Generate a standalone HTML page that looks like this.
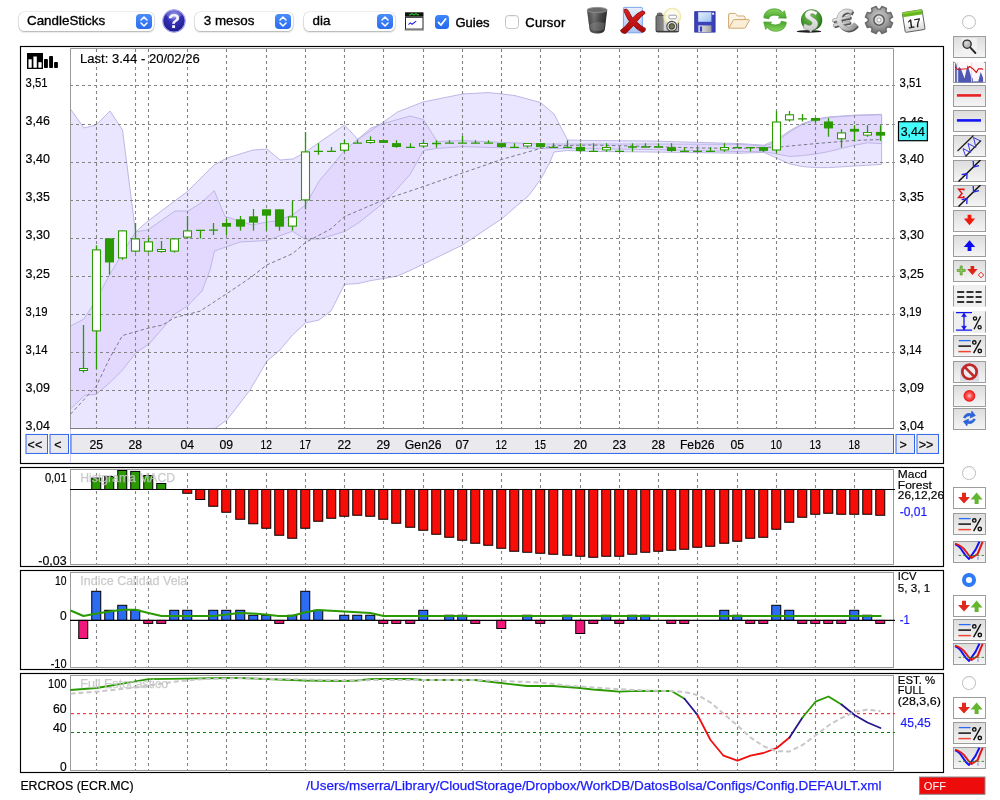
<!DOCTYPE html>
<html lang="ca"><head><meta charset="utf-8"><title>ERCROS (ECR.MC)</title>
<style>
html,body{margin:0;padding:0;background:#fff;}
body{width:1000px;height:800px;position:relative;overflow:hidden;will-change:transform;font-family:"Liberation Sans",sans-serif;color:#000;}
#chart{position:absolute;left:0;top:0;}
svg text{font-family:"Liberation Sans",sans-serif;}
.sel{position:absolute;top:11.5px;height:19px;background:#fff;border-radius:5.5px;box-shadow:0 0 0 0.5px rgba(0,0,0,.13),0 1px 2px rgba(0,0,0,.28);font-size:13.4px;line-height:18.5px;box-sizing:border-box;padding-left:8px;-webkit-text-stroke:0.35px #000;}
.sel i{position:absolute;right:1.6px;top:2.2px;width:16px;height:15px;border-radius:4px;background:linear-gradient(#4a8dfa,#2a6cf0);}
.sel i svg{position:absolute;left:0;top:0;}
.cb{position:absolute;top:14.5px;width:14px;height:14px;border-radius:3.5px;box-sizing:border-box;}
.cb.on{background:linear-gradient(#3f86fa,#2468ee);}
.cb.off{background:#fff;border:1px solid #c4c4c4;box-shadow:inset 0 1px 1px rgba(0,0,0,.06);}
.lbl{position:absolute;top:13.9px;font-size:13px;-webkit-text-stroke:0.4px #000;line-height:18px;}
.ico{position:absolute;}
.rb{position:absolute;left:953px;width:33px;height:22px;box-sizing:border-box;border:1px solid #9c9c9c;background:linear-gradient(#dddddd,#f4f4f4);}
.rb.w{background:#fff;}
.rb svg{position:absolute;left:-1px;top:-1px;}
.radio{position:absolute;left:962px;width:13.5px;height:13.5px;border-radius:50%;box-sizing:border-box;border:1px solid #bdbdbd;background:#fff;box-shadow:inset 0 1px 1px rgba(0,0,0,.05);}
.radio.on{border:4.3px solid #2f7bf6;}
.nav{position:absolute;top:434.5px;height:19px;box-sizing:border-box;border:1px solid #3d70e4;background:#e9e9ee;font-size:12.5px;line-height:16px;text-align:center;}
.dl{position:absolute;top:437px;width:50px;margin-left:-25px;text-align:center;font-size:12px;line-height:14px;}
.st{position:absolute;font-size:12.4px;line-height:16px;white-space:nowrap;}
.ax{position:absolute;font-size:12px;line-height:12px;white-space:nowrap;}
.axr{text-align:right;width:50px;}
</style></head><body>
<svg id="chart" width="1000" height="800" viewBox="0 0 1000 800">
<g fill="none" stroke="#000" stroke-width="1.15">
<rect x="20.5" y="46.5" width="923" height="417"/>
<rect x="20.5" y="467.5" width="923" height="99"/>
<rect x="20.5" y="570.5" width="923" height="99"/>
<rect x="20.5" y="673.5" width="923" height="99"/>
</g>
<polygon points="70.5,109 84,128 96,125 110,111 122.5,130 135.5,232 148,221 188,191 214,165 227,158 253,150 267,149 280,160 293,159 305.5,152 344.5,125 358,139.5 383.5,122 397.5,112 423,102 462.5,94 488,92.6 500,93.7 515,95.6 540.5,102.5 554,114 567.5,140 590,140.5 650,141 740,143.6 764,145.2 776.5,139.6 789.6,130.8 802.4,123.6 815.5,119.1 828.5,116.9 854.6,115.1 881.6,114.3 881.6,164.4 854.6,166 828.5,167.6 815.5,167.6 802.4,166.5 789.6,163.9 776.5,158 764,152.4 740,153.2 650,152 590,151.4 567.5,150.5 554,152 549.5,163 540.5,179.6 529,195.3 501.5,219 481,232.6 462.5,245 423.5,264 410,270.5 397.5,276 383.5,278.5 371,280.5 358,283.6 344.5,284.3 331,311 319,320 305.5,323 292.5,335 280,350 267,361 250,390 227,420 215,428.5 70.5,428.5" fill="#ebe6ff"/>
<polygon points="70.5,326 84,319 96,300 110,274 135.5,232 148,229.8 175,211 188,211 201,203 214.2,190.7 225,216.5 240,221 252,225 267,222 276,221 292.5,215 305.5,205 319.5,180.5 328.5,170 344.5,150.5 371,128 383.5,123.5 410,116 423.5,119.6 437,141.5 462.5,140.6 501.5,142.4 540.5,144 590,144 650,144 740,144.4 764,146 772,143.6 781.6,138 789.6,131.9 802.4,124.4 815.5,120.4 828.5,117.5 854.6,115.6 881.6,114.8 881.6,143.6 867.5,142.8 854.6,145.2 841.6,148.4 828.5,151.6 815.5,154 802.4,155.6 789.6,156.4 776.5,154 764,151.6 740,151.6 650,149.5 590,148.6 540.5,148.4 501.5,147.8 462.5,146.6 437,148.4 423.5,150.5 410,174.5 398,188 383.5,203 359,222.5 344.5,231.5 320,239 304.5,239 292.5,231.2 267,240.5 240,242 214.5,251 210,270 202,291 187.5,306 175,314 149,344 136,352.5 122.5,370 110,382.5 96,394.5 85,395 70.5,409" fill="#e3d9fe"/>
<g fill="none" stroke="#bcb8e6" stroke-width="1">
<polyline points="70.5,109 84,128 96,125 110,111 122.5,130 135.5,232 148,221 188,191 214,165 227,158 253,150 267,149 280,160 293,159 305.5,152 344.5,125 358,139.5 383.5,122 397.5,112 423,102 462.5,94 488,92.6 500,93.7 515,95.6 540.5,102.5 554,114 567.5,140 590,140.5 650,141 740,143.6 764,145.2 776.5,139.6 789.6,130.8 802.4,123.6 815.5,119.1 828.5,116.9 854.6,115.1 881.6,114.3 881.6,164.4 854.6,166 828.5,167.6 815.5,167.6 802.4,166.5 789.6,163.9 776.5,158 764,152.4 740,153.2 650,152 590,151.4 567.5,150.5 554,152 549.5,163 540.5,179.6 529,195.3 501.5,219 481,232.6 462.5,245 423.5,264 410,270.5 397.5,276 383.5,278.5 371,280.5 358,283.6 344.5,284.3 331,311 319,320 305.5,323 292.5,335 280,350 267,361 250,390 227,420 215,428.5"/>
<polyline points="70.5,326 84,319 96,300 110,274 135.5,232 148,229.8 175,211 188,211 201,203 214.2,190.7 225,216.5 240,221 252,225 267,222 276,221 292.5,215 305.5,205 319.5,180.5 328.5,170 344.5,150.5 371,128 383.5,123.5 410,116 423.5,119.6 437,141.5 462.5,140.6 501.5,142.4 540.5,144 590,144 650,144 740,144.4 764,146 772,143.6 781.6,138 789.6,131.9 802.4,124.4 815.5,120.4 828.5,117.5 854.6,115.6 881.6,114.8 881.6,143.6 867.5,142.8 854.6,145.2 841.6,148.4 828.5,151.6 815.5,154 802.4,155.6 789.6,156.4 776.5,154 764,151.6 740,151.6 650,149.5 590,148.6 540.5,148.4 501.5,147.8 462.5,146.6 437,148.4 423.5,150.5 410,174.5 398,188 383.5,203 359,222.5 344.5,231.5 320,239 304.5,239 292.5,231.2 267,240.5 240,242 214.5,251 210,270 202,291 187.5,306 175,314 149,344 136,352.5 122.5,370 110,382.5 96,394.5 85,395 70.5,409"/>
</g>
<line x1="70.5" y1="109" x2="70.5" y2="463" stroke="#cfc9f3" stroke-width="1"/>
<g stroke="#848484" stroke-width="1.1" stroke-dasharray="3 3">
<line x1="96.5" y1="49" x2="96.5" y2="428"/>
<line x1="135.5" y1="49" x2="135.5" y2="428"/>
<line x1="148.5" y1="49" x2="148.5" y2="428"/>
<line x1="187.5" y1="49" x2="187.5" y2="428"/>
<line x1="226.5" y1="49" x2="226.5" y2="428"/>
<line x1="266.5" y1="49" x2="266.5" y2="428"/>
<line x1="305.5" y1="49" x2="305.5" y2="428"/>
<line x1="344.5" y1="49" x2="344.5" y2="428"/>
<line x1="383.5" y1="49" x2="383.5" y2="428"/>
<line x1="423.5" y1="49" x2="423.5" y2="428"/>
<line x1="462.5" y1="49" x2="462.5" y2="428"/>
<line x1="501.5" y1="49" x2="501.5" y2="428"/>
<line x1="540.5" y1="49" x2="540.5" y2="428"/>
<line x1="580.5" y1="49" x2="580.5" y2="428"/>
<line x1="619.5" y1="49" x2="619.5" y2="428"/>
<line x1="658.5" y1="49" x2="658.5" y2="428"/>
<line x1="697.5" y1="49" x2="697.5" y2="428"/>
<line x1="737.5" y1="49" x2="737.5" y2="428"/>
<line x1="776.5" y1="49" x2="776.5" y2="428"/>
<line x1="815.5" y1="49" x2="815.5" y2="428"/>
<line x1="854.5" y1="49" x2="854.5" y2="428"/>
<line x1="70" y1="85.5" x2="895" y2="85.5"/>
<line x1="70" y1="124.5" x2="895" y2="124.5"/>
<line x1="70" y1="162.5" x2="895" y2="162.5"/>
<line x1="70" y1="200.5" x2="895" y2="200.5"/>
<line x1="70" y1="238.5" x2="895" y2="238.5"/>
<line x1="70" y1="276.5" x2="895" y2="276.5"/>
<line x1="70" y1="314.5" x2="895" y2="314.5"/>
<line x1="70" y1="352.5" x2="895" y2="352.5"/>
<line x1="70" y1="390.5" x2="895" y2="390.5"/>
</g>
<path d="M70.5 428.5V48.5H893.5V428.5" fill="none" stroke="#9a9a9a" stroke-width="1"/>
<line x1="70" y1="428.5" x2="894" y2="428.5" stroke="#7d7d7d" stroke-width="1"/>
<polyline points="70.5,414.2 96.3,386.2 110,357.5 122.5,335.5 148.7,328 162.5,325 175,317.5 200,311.2 226.7,293.7 250,278 266.7,265 292.5,253.7 305.5,242.5 331,228.8 344.5,216.5 383.5,200 423.5,186.5 462.5,173 501.5,159.5 540.5,148.4 554,145.8 590,145 650,146.5 700,148 740,148.4 781.6,146.8 815.5,143.6 854.6,140.4 880.5,139.6" fill="none" stroke="#747482" stroke-width="0.95" stroke-dasharray="3.5 2.5"/>
<g stroke="#2a9a00" stroke-width="1.3" fill="#fff">
<line x1="83.5" y1="325" x2="83.5" y2="372.6"/>
<rect x="79.5" y="368.5" width="8" height="2" fill="#fff" stroke-width="1"/>
<line x1="96.5" y1="245.4" x2="96.5" y2="369"/>
<rect x="92.5" y="249.9" width="8" height="81" fill="#fff" stroke-width="1.1"/>
<line x1="109.5" y1="238.4" x2="109.5" y2="274.6"/>
<rect x="105.5" y="238.9" width="8" height="23" fill="#2a9a00" stroke-width="1.1"/>
<line x1="122.5" y1="230.4" x2="122.5" y2="259.8"/>
<rect x="118.5" y="230.9" width="8" height="27" fill="#fff" stroke-width="1.1"/>
<line x1="135.5" y1="223" x2="135.5" y2="252.6"/>
<rect x="131.5" y="238.9" width="8" height="12.2" fill="#fff" stroke-width="1.1"/>
<line x1="148.5" y1="238" x2="148.5" y2="252.6"/>
<rect x="144.5" y="241.9" width="8" height="9.2" fill="#fff" stroke-width="1.1"/>
<line x1="161.5" y1="241" x2="161.5" y2="252.6"/>
<rect x="157.5" y="249.5" width="8" height="2" fill="#fff" stroke-width="1"/>
<line x1="174.5" y1="238.4" x2="174.5" y2="252.6"/>
<rect x="170.5" y="238.9" width="8" height="12.2" fill="#fff" stroke-width="1.1"/>
<line x1="187.5" y1="216" x2="187.5" y2="238.8"/>
<rect x="183.5" y="230.9" width="8" height="6.2" fill="#fff" stroke-width="1.1"/>
<path d="M200.5 230.4V238.6M196 230.4H205" fill="none"/>
<path d="M213.5 223V235M209 230.2H218" fill="none"/>
<line x1="226.5" y1="219" x2="226.5" y2="235"/>
<rect x="222.5" y="223.5" width="8" height="2.6" fill="#2a9a00" stroke-width="1.1"/>
<line x1="240.5" y1="216" x2="240.5" y2="230.6"/>
<rect x="236.5" y="219.9" width="8" height="6.2" fill="#2a9a00" stroke-width="1.1"/>
<line x1="253.5" y1="209" x2="253.5" y2="230.6"/>
<rect x="249.5" y="216.9" width="8" height="5.2" fill="#2a9a00" stroke-width="1.1"/>
<line x1="266.5" y1="209.4" x2="266.5" y2="230.6"/>
<rect x="262.5" y="209.9" width="8" height="5.2" fill="#2a9a00" stroke-width="1.1"/>
<line x1="279.5" y1="209.4" x2="279.5" y2="230.6"/>
<rect x="275.5" y="209.9" width="8" height="16.2" fill="#2a9a00" stroke-width="1.1"/>
<line x1="292.5" y1="200.4" x2="292.5" y2="230.6"/>
<rect x="288.5" y="216.9" width="8" height="9.2" fill="#fff" stroke-width="1.1"/>
<line x1="305.5" y1="132" x2="305.5" y2="209.4"/>
<rect x="301.5" y="151.9" width="8" height="48" fill="#fff" stroke-width="1.1"/>
<path d="M318.5 143.2V154.8M314 151.3H323" fill="none"/>
<path d="M331.5 147V151.3M327 151.3H336" fill="none"/>
<line x1="344.5" y1="139.8" x2="344.5" y2="151.8"/>
<rect x="340.5" y="143.7" width="8" height="6.5" fill="#fff" stroke-width="1.1"/>
<path d="M357.5 139.8V143.2M353 143.2H362" fill="none"/>
<line x1="370.5" y1="136.3" x2="370.5" y2="143.6"/>
<rect x="366.5" y="140.5" width="8" height="2" fill="#fff" stroke-width="1"/>
<line x1="383.5" y1="140.2" x2="383.5" y2="142.8"/>
<rect x="379.5" y="140.7" width="8" height="1.6" fill="#2a9a00" stroke-width="1.1"/>
<line x1="396.5" y1="140.2" x2="396.5" y2="147.8"/>
<rect x="392.5" y="143.7" width="8" height="2.8" fill="#2a9a00" stroke-width="1.1"/>
<path d="M410.5 143.2V147.3M406 147.3H415" fill="none"/>
<line x1="423.5" y1="139.8" x2="423.5" y2="147.8"/>
<rect x="419.5" y="143.5" width="8" height="2.5" fill="#fff" stroke-width="1"/>
<path d="M436.5 140.2V147.8M432 143.5H441" fill="none"/>
<path d="M449.5 140.2V143.2M445 143.2H454" fill="none"/>
<path d="M462.5 136V143.2M458 143.2H467" fill="none"/>
<path d="M475.5 140.2V143.2M471 143.2H480" fill="none"/>
<path d="M488.5 140.2V143.2M484 143.2H493" fill="none"/>
<line x1="501.5" y1="143.2" x2="501.5" y2="147.8"/>
<rect x="497.5" y="143.7" width="8" height="2.8" fill="#2a9a00" stroke-width="1.1"/>
<path d="M514.5 143.2V147.3M510 147.3H519" fill="none"/>
<line x1="527.5" y1="143.5" x2="527.5" y2="147.8"/>
<rect x="523.5" y="143.5" width="8" height="2.5" fill="#fff" stroke-width="1"/>
<line x1="540.5" y1="143.2" x2="540.5" y2="147.8"/>
<rect x="536.5" y="143.7" width="8" height="2.8" fill="#2a9a00" stroke-width="1.1"/>
<path d="M553.5 143.2V147.3M549 147.3H558" fill="none"/>
<path d="M567.5 140.2V147.3M563 147.3H572" fill="none"/>
<line x1="580.5" y1="143.2" x2="580.5" y2="151.8"/>
<rect x="576.5" y="147.5" width="8" height="3" fill="#2a9a00" stroke-width="1.1"/>
<path d="M593.5 143.2V151.3M589 151.3H598" fill="none"/>
<line x1="606.5" y1="143.2" x2="606.5" y2="151.8"/>
<rect x="602.5" y="147.5" width="8" height="2.4" fill="#fff" stroke-width="1"/>
<path d="M619.5 147V151.3M615 151.3H624" fill="none"/>
<path d="M632.5 143.2V151.8M628 147H637" fill="none"/>
<path d="M645.5 143.2V147M641 147H650" fill="none"/>
<path d="M658.5 143.2V147M654 147H663" fill="none"/>
<line x1="671.5" y1="143.2" x2="671.5" y2="151.8"/>
<rect x="667.5" y="147.8" width="8" height="2.7" fill="#2a9a00" stroke-width="1.1"/>
<path d="M684.5 147.3V151.3M680 151.3H689" fill="none"/>
<path d="M697.5 147V151.3M693 151.3H702" fill="none"/>
<path d="M710.5 147.3V151.3M706 151.3H715" fill="none"/>
<line x1="724.5" y1="143.2" x2="724.5" y2="151.8"/>
<rect x="720.5" y="147.5" width="8" height="2.4" fill="#fff" stroke-width="1"/>
<path d="M737.5 143.2V147.7M733 147.7H742" fill="none"/>
<path d="M750.5 147.6V151.6M746 147.6H755" fill="none"/>
<line x1="763.5" y1="147.1" x2="763.5" y2="151.8"/>
<rect x="759.5" y="147.6" width="8" height="2.7" fill="#2a9a00" stroke-width="1.1"/>
<line x1="776.5" y1="110.8" x2="776.5" y2="153.2"/>
<rect x="772.5" y="122" width="8" height="28" fill="#fff" stroke-width="1.1"/>
<line x1="789.5" y1="111" x2="789.5" y2="121.6"/>
<rect x="785.5" y="114.8" width="8" height="5.1" fill="#fff" stroke-width="1.1"/>
<path d="M802.5 114V121.6M798 118.8H807" fill="none"/>
<line x1="815.5" y1="118" x2="815.5" y2="122.8"/>
<rect x="811.5" y="118.5" width="8" height="1.7" fill="#2a9a00" stroke-width="1.1"/>
<line x1="828.5" y1="118" x2="828.5" y2="136.7"/>
<rect x="824.5" y="122" width="8" height="5.9" fill="#2a9a00" stroke-width="1.1"/>
<line x1="841.5" y1="129.2" x2="841.5" y2="147.6"/>
<rect x="837.5" y="132.9" width="8" height="5.9" fill="#fff" stroke-width="1.1"/>
<line x1="854.5" y1="125.2" x2="854.5" y2="140.9"/>
<rect x="850.5" y="129.4" width="8" height="1.7" fill="#2a9a00" stroke-width="1.1"/>
<line x1="867.5" y1="125.2" x2="867.5" y2="136.8"/>
<rect x="863.5" y="132.5" width="8" height="2.6" fill="#fff" stroke-width="1"/>
<line x1="880.5" y1="125.2" x2="880.5" y2="140.9"/>
<rect x="876.5" y="132.5" width="8" height="2.6" fill="#2a9a00" stroke-width="1.1"/>
</g>
<rect x="70.5" y="469.5" width="823" height="95" fill="none" stroke="#9a9a9a" stroke-width="1"/>
<g stroke="#848484" stroke-width="1.1" stroke-dasharray="3 3">
<line x1="96.5" y1="473" x2="96.5" y2="564"/>
<line x1="135.5" y1="473" x2="135.5" y2="564"/>
<line x1="148.5" y1="473" x2="148.5" y2="564"/>
<line x1="187.5" y1="473" x2="187.5" y2="564"/>
<line x1="226.5" y1="473" x2="226.5" y2="564"/>
<line x1="266.5" y1="473" x2="266.5" y2="564"/>
<line x1="305.5" y1="473" x2="305.5" y2="564"/>
<line x1="344.5" y1="473" x2="344.5" y2="564"/>
<line x1="383.5" y1="473" x2="383.5" y2="564"/>
<line x1="423.5" y1="473" x2="423.5" y2="564"/>
<line x1="462.5" y1="473" x2="462.5" y2="564"/>
<line x1="501.5" y1="473" x2="501.5" y2="564"/>
<line x1="540.5" y1="473" x2="540.5" y2="564"/>
<line x1="580.5" y1="473" x2="580.5" y2="564"/>
<line x1="619.5" y1="473" x2="619.5" y2="564"/>
<line x1="658.5" y1="473" x2="658.5" y2="564"/>
<line x1="697.5" y1="473" x2="697.5" y2="564"/>
<line x1="737.5" y1="473" x2="737.5" y2="564"/>
<line x1="776.5" y1="473" x2="776.5" y2="564"/>
<line x1="815.5" y1="473" x2="815.5" y2="564"/>
<line x1="854.5" y1="473" x2="854.5" y2="564"/>
</g>
<g stroke="#000" stroke-width="1">
<rect x="91.75" y="478.1" width="9" height="11.35" fill="#2a9a00"/>
<rect x="104.75" y="476.5" width="9" height="12.95" fill="#2a9a00"/>
<rect x="117.75" y="470.5" width="9" height="18.95" fill="#2a9a00"/>
<rect x="130.75" y="471.4" width="9" height="18.05" fill="#2a9a00"/>
<rect x="143.75" y="475.5" width="9" height="13.95" fill="#2a9a00"/>
<rect x="156.75" y="483.5" width="9" height="5.95" fill="#2a9a00"/>
<rect x="182.75" y="489.45" width="9" height="3.8" fill="#f70d08"/>
<rect x="195.75" y="489.45" width="9" height="10.05" fill="#f70d08"/>
<rect x="208.75" y="489.45" width="9" height="16.8" fill="#f70d08"/>
<rect x="221.75" y="489.45" width="9" height="22.8" fill="#f70d08"/>
<rect x="235.75" y="489.45" width="9" height="29.8" fill="#f70d08"/>
<rect x="248.75" y="489.45" width="9" height="34.3" fill="#f70d08"/>
<rect x="261.75" y="489.45" width="9" height="38.8" fill="#f70d08"/>
<rect x="274.75" y="489.45" width="9" height="45.8" fill="#f70d08"/>
<rect x="287.75" y="489.45" width="9" height="48.8" fill="#f70d08"/>
<rect x="300.75" y="489.45" width="9" height="38.8" fill="#f70d08"/>
<rect x="313.75" y="489.45" width="9" height="31.8" fill="#f70d08"/>
<rect x="326.75" y="489.45" width="9" height="28.8" fill="#f70d08"/>
<rect x="339.75" y="489.45" width="9" height="26.8" fill="#f70d08"/>
<rect x="352.75" y="489.45" width="9" height="25.8" fill="#f70d08"/>
<rect x="365.75" y="489.45" width="9" height="26.8" fill="#f70d08"/>
<rect x="378.75" y="489.45" width="9" height="29.8" fill="#f70d08"/>
<rect x="391.75" y="489.45" width="9" height="33.8" fill="#f70d08"/>
<rect x="405.75" y="489.45" width="9" height="37.8" fill="#f70d08"/>
<rect x="418.75" y="489.45" width="9" height="40.8" fill="#f70d08"/>
<rect x="431.75" y="489.45" width="9" height="44.8" fill="#f70d08"/>
<rect x="444.75" y="489.45" width="9" height="47.8" fill="#f70d08"/>
<rect x="457.75" y="489.45" width="9" height="50.8" fill="#f70d08"/>
<rect x="470.75" y="489.45" width="9" height="53.8" fill="#f70d08"/>
<rect x="483.75" y="489.45" width="9" height="55.8" fill="#f70d08"/>
<rect x="496.75" y="489.45" width="9" height="58.8" fill="#f70d08"/>
<rect x="509.75" y="489.45" width="9" height="61.8" fill="#f70d08"/>
<rect x="522.75" y="489.45" width="9" height="62.8" fill="#f70d08"/>
<rect x="535.75" y="489.45" width="9" height="63.8" fill="#f70d08"/>
<rect x="548.75" y="489.45" width="9" height="64.8" fill="#f70d08"/>
<rect x="562.75" y="489.45" width="9" height="65.8" fill="#f70d08"/>
<rect x="575.75" y="489.45" width="9" height="66.8" fill="#f70d08"/>
<rect x="588.75" y="489.45" width="9" height="67.8" fill="#f70d08"/>
<rect x="601.75" y="489.45" width="9" height="66.8" fill="#f70d08"/>
<rect x="614.75" y="489.45" width="9" height="66.8" fill="#f70d08"/>
<rect x="627.75" y="489.45" width="9" height="64.8" fill="#f70d08"/>
<rect x="640.75" y="489.45" width="9" height="62.8" fill="#f70d08"/>
<rect x="653.75" y="489.45" width="9" height="61.8" fill="#f70d08"/>
<rect x="666.75" y="489.45" width="9" height="60.8" fill="#f70d08"/>
<rect x="679.75" y="489.45" width="9" height="59.8" fill="#f70d08"/>
<rect x="692.75" y="489.45" width="9" height="57.8" fill="#f70d08"/>
<rect x="705.75" y="489.45" width="9" height="56.8" fill="#f70d08"/>
<rect x="719.75" y="489.45" width="9" height="53.8" fill="#f70d08"/>
<rect x="732.75" y="489.45" width="9" height="51.8" fill="#f70d08"/>
<rect x="745.75" y="489.45" width="9" height="48.8" fill="#f70d08"/>
<rect x="758.75" y="489.45" width="9" height="47.8" fill="#f70d08"/>
<rect x="771.75" y="489.45" width="9" height="39.8" fill="#f70d08"/>
<rect x="784.75" y="489.45" width="9" height="32.8" fill="#f70d08"/>
<rect x="797.75" y="489.45" width="9" height="27.8" fill="#f70d08"/>
<rect x="810.75" y="489.45" width="9" height="24.8" fill="#f70d08"/>
<rect x="823.75" y="489.45" width="9" height="23.8" fill="#f70d08"/>
<rect x="836.75" y="489.45" width="9" height="24.8" fill="#f70d08"/>
<rect x="849.75" y="489.45" width="9" height="24.8" fill="#f70d08"/>
<rect x="862.75" y="489.45" width="9" height="24.8" fill="#f70d08"/>
<rect x="875.75" y="489.45" width="9" height="25.8" fill="#f70d08"/>
</g>
<line x1="70" y1="489.45" x2="895" y2="489.45" stroke="#000" stroke-width="1.1"/>
<rect x="70.5" y="572.5" width="823" height="95" fill="none" stroke="#9a9a9a" stroke-width="1"/>
<g stroke="#848484" stroke-width="1.1" stroke-dasharray="3 3">
<line x1="96.5" y1="576" x2="96.5" y2="667"/>
<line x1="135.5" y1="576" x2="135.5" y2="667"/>
<line x1="148.5" y1="576" x2="148.5" y2="667"/>
<line x1="187.5" y1="576" x2="187.5" y2="667"/>
<line x1="226.5" y1="576" x2="226.5" y2="667"/>
<line x1="266.5" y1="576" x2="266.5" y2="667"/>
<line x1="305.5" y1="576" x2="305.5" y2="667"/>
<line x1="344.5" y1="576" x2="344.5" y2="667"/>
<line x1="383.5" y1="576" x2="383.5" y2="667"/>
<line x1="423.5" y1="576" x2="423.5" y2="667"/>
<line x1="462.5" y1="576" x2="462.5" y2="667"/>
<line x1="501.5" y1="576" x2="501.5" y2="667"/>
<line x1="540.5" y1="576" x2="540.5" y2="667"/>
<line x1="580.5" y1="576" x2="580.5" y2="667"/>
<line x1="619.5" y1="576" x2="619.5" y2="667"/>
<line x1="658.5" y1="576" x2="658.5" y2="667"/>
<line x1="697.5" y1="576" x2="697.5" y2="667"/>
<line x1="737.5" y1="576" x2="737.5" y2="667"/>
<line x1="776.5" y1="576" x2="776.5" y2="667"/>
<line x1="815.5" y1="576" x2="815.5" y2="667"/>
<line x1="854.5" y1="576" x2="854.5" y2="667"/>
</g>
<g stroke="#000" stroke-width="1">
<rect x="78.75" y="620.4" width="9" height="18.1" fill="#f0187a"/>
<rect x="91.75" y="591.3" width="9" height="29.1" fill="#2b6cf2"/>
<rect x="104.75" y="610.3" width="9" height="10.1" fill="#2b6cf2"/>
<rect x="117.75" y="605.3" width="9" height="15.1" fill="#2b6cf2"/>
<rect x="130.75" y="610.3" width="9" height="10.1" fill="#2b6cf2"/>
<rect x="143.75" y="620.4" width="9" height="3" fill="#f0187a"/>
<rect x="156.75" y="620.4" width="9" height="3" fill="#f0187a"/>
<rect x="169.75" y="610.3" width="9" height="10.1" fill="#2b6cf2"/>
<rect x="182.75" y="610.3" width="9" height="10.1" fill="#2b6cf2"/>
<rect x="208.75" y="610.3" width="9" height="10.1" fill="#2b6cf2"/>
<rect x="221.75" y="610.3" width="9" height="10.1" fill="#2b6cf2"/>
<rect x="235.75" y="610.3" width="9" height="10.1" fill="#2b6cf2"/>
<rect x="248.75" y="615.25" width="9" height="5.15" fill="#2b6cf2"/>
<rect x="261.75" y="615.25" width="9" height="5.15" fill="#2b6cf2"/>
<rect x="274.75" y="620.4" width="9" height="3" fill="#f0187a"/>
<rect x="287.75" y="615.25" width="9" height="5.15" fill="#2b6cf2"/>
<rect x="300.75" y="591.3" width="9" height="29.1" fill="#2b6cf2"/>
<rect x="313.75" y="610.3" width="9" height="10.1" fill="#2b6cf2"/>
<rect x="339.75" y="615.25" width="9" height="5.15" fill="#2b6cf2"/>
<rect x="352.75" y="615.25" width="9" height="5.15" fill="#2b6cf2"/>
<rect x="365.75" y="615.25" width="9" height="5.15" fill="#2b6cf2"/>
<rect x="378.75" y="620.4" width="9" height="3" fill="#f0187a"/>
<rect x="391.75" y="620.4" width="9" height="3" fill="#f0187a"/>
<rect x="405.75" y="620.4" width="9" height="3" fill="#f0187a"/>
<rect x="418.75" y="610.3" width="9" height="10.1" fill="#2b6cf2"/>
<rect x="444.75" y="615.25" width="9" height="5.15" fill="#2b6cf2"/>
<rect x="457.75" y="615.25" width="9" height="5.15" fill="#2b6cf2"/>
<rect x="470.75" y="620.4" width="9" height="3" fill="#f0187a"/>
<rect x="496.75" y="620.4" width="9" height="8.1" fill="#f0187a"/>
<rect x="522.75" y="615.25" width="9" height="5.15" fill="#2b6cf2"/>
<rect x="535.75" y="620.4" width="9" height="3" fill="#f0187a"/>
<rect x="562.75" y="615.25" width="9" height="5.15" fill="#2b6cf2"/>
<rect x="575.75" y="620.4" width="9" height="13.1" fill="#f0187a"/>
<rect x="588.75" y="620.4" width="9" height="3" fill="#f0187a"/>
<rect x="601.75" y="615.25" width="9" height="5.15" fill="#2b6cf2"/>
<rect x="614.75" y="620.4" width="9" height="3" fill="#f0187a"/>
<rect x="627.75" y="615.25" width="9" height="5.15" fill="#2b6cf2"/>
<rect x="640.75" y="615.25" width="9" height="5.15" fill="#2b6cf2"/>
<rect x="666.75" y="620.4" width="9" height="3" fill="#f0187a"/>
<rect x="679.75" y="620.4" width="9" height="3" fill="#f0187a"/>
<rect x="719.75" y="610.3" width="9" height="10.1" fill="#2b6cf2"/>
<rect x="732.75" y="615.25" width="9" height="5.15" fill="#2b6cf2"/>
<rect x="745.75" y="620.4" width="9" height="3" fill="#f0187a"/>
<rect x="758.75" y="620.4" width="9" height="3" fill="#f0187a"/>
<rect x="771.75" y="605.3" width="9" height="15.1" fill="#2b6cf2"/>
<rect x="784.75" y="610.3" width="9" height="10.1" fill="#2b6cf2"/>
<rect x="797.75" y="620.4" width="9" height="3" fill="#f0187a"/>
<rect x="810.75" y="620.4" width="9" height="3" fill="#f0187a"/>
<rect x="823.75" y="620.4" width="9" height="3" fill="#f0187a"/>
<rect x="836.75" y="620.4" width="9" height="3" fill="#f0187a"/>
<rect x="849.75" y="610.3" width="9" height="10.1" fill="#2b6cf2"/>
<rect x="862.75" y="615.25" width="9" height="5.15" fill="#2b6cf2"/>
<rect x="875.75" y="620.4" width="9" height="3" fill="#f0187a"/>
</g>
<line x1="70" y1="620.4" x2="895" y2="620.4" stroke="#000" stroke-width="1.1"/>
<polyline points="70.5,610.5 83.5,616 96.5,613.5 109.5,611.5 122.5,609.7 135.5,609.7 148.5,613 161.5,616 213.5,616 226.5,614.5 239.5,613 252.5,613.5 265.5,614.5 278.5,616 291.5,616 304.5,612.5 317.5,610 344.5,611.5 370.5,613 383.5,616 881.5,616" fill="none" stroke="#2a9a00" stroke-width="2" stroke-linejoin="round"/>
<rect x="70.5" y="675.5" width="823" height="95" fill="none" stroke="#9a9a9a" stroke-width="1"/>
<g stroke="#848484" stroke-width="1.1" stroke-dasharray="3 3">
<line x1="96.5" y1="679" x2="96.5" y2="770"/>
<line x1="135.5" y1="679" x2="135.5" y2="770"/>
<line x1="148.5" y1="679" x2="148.5" y2="770"/>
<line x1="187.5" y1="679" x2="187.5" y2="770"/>
<line x1="226.5" y1="679" x2="226.5" y2="770"/>
<line x1="266.5" y1="679" x2="266.5" y2="770"/>
<line x1="305.5" y1="679" x2="305.5" y2="770"/>
<line x1="344.5" y1="679" x2="344.5" y2="770"/>
<line x1="383.5" y1="679" x2="383.5" y2="770"/>
<line x1="423.5" y1="679" x2="423.5" y2="770"/>
<line x1="462.5" y1="679" x2="462.5" y2="770"/>
<line x1="501.5" y1="679" x2="501.5" y2="770"/>
<line x1="540.5" y1="679" x2="540.5" y2="770"/>
<line x1="580.5" y1="679" x2="580.5" y2="770"/>
<line x1="619.5" y1="679" x2="619.5" y2="770"/>
<line x1="658.5" y1="679" x2="658.5" y2="770"/>
<line x1="697.5" y1="679" x2="697.5" y2="770"/>
<line x1="737.5" y1="679" x2="737.5" y2="770"/>
<line x1="776.5" y1="679" x2="776.5" y2="770"/>
<line x1="815.5" y1="679" x2="815.5" y2="770"/>
<line x1="854.5" y1="679" x2="854.5" y2="770"/>
</g>
<line x1="71" y1="713.7" x2="895" y2="713.7" stroke="#f01010" stroke-width="1" stroke-dasharray="3 3"/>
<line x1="71" y1="732.5" x2="895" y2="732.5" stroke="#0a7a0a" stroke-width="1" stroke-dasharray="3 3"/>
<polyline points="70.5,690 96.5,688 122.5,683.7 148.5,679.2 187.5,678.7 226.5,678 240,678 266,679 305,680.5 344,681 357,680.5 370,679.2 383,679 410,679 423,680 475,680 501,683 527,686 553,686 567,687 580,688 593,689.5 606,690.5 619,691.7 632,691.2 645,691 671.5,691" fill="none" stroke="#2a9a00" stroke-width="1.8" stroke-linejoin="round"/>
<polyline points="671.5,691 684.5,698.7" fill="none" stroke="#2a9a00" stroke-width="1.8" stroke-linejoin="round" stroke-linecap="round"/>
<polyline points="684.5,698.7 697.5,715" fill="none" stroke="#25168c" stroke-width="1.8" stroke-linejoin="round" stroke-linecap="round"/>
<polyline points="697.5,715 710.5,740 723.5,755.7 737.5,760.7 750.5,755.7 763.5,753 776.5,748.2 789.5,737.5" fill="none" stroke="#f01010" stroke-width="1.8" stroke-linejoin="round" stroke-linecap="round"/>
<polyline points="789.5,737.5 802.5,717.5" fill="none" stroke="#25168c" stroke-width="1.8" stroke-linejoin="round" stroke-linecap="round"/>
<polyline points="802.5,717.5 815.5,701.7 828.5,696.5 841.5,704.5" fill="none" stroke="#2a9a00" stroke-width="1.8" stroke-linejoin="round" stroke-linecap="round"/>
<polyline points="841.5,704.5 854.5,715 867.5,722.5 880.5,728" fill="none" stroke="#25168c" stroke-width="1.8" stroke-linejoin="round" stroke-linecap="round"/>
<polyline points="70.5,693.7 96.5,691.7 135.5,687.5 174.5,681.7 200.5,679.2 240,678.2 280,679 305,679.5 344,680.5 383,680 410,680 475,680 501,681 527,682 540,682.5 567,685.5 593,687.5 619,689.2 645,690.5 671.5,691 684.5,692 697.5,695 710.5,702.5 723.5,713.7 737.5,725.5 750.5,737.5 763.5,746.2 776.5,751.2 789.5,751.5 802.5,745 815.5,735.5 828.5,725.5 841.5,718 854.5,712 867.5,709.5 880.5,711.2" fill="none" stroke="#c8c8c8" stroke-width="2" stroke-dasharray="5 3" stroke-linejoin="round"/>
<rect x="27" y="53" width="16" height="16" fill="#000"/><g fill="#fff"><rect x="28.5" y="59.3" width="3.2" height="8.4"/><rect x="33.4" y="56.5" width="3.4" height="11.2"/><rect x="38.4" y="62.2" width="3.2" height="5.5"/></g><g fill="#000"><rect x="44" y="59" width="3.9" height="9" rx="0.8"/><rect x="49.1" y="56.1" width="3.9" height="11.9" rx="0.8"/><rect x="54.1" y="62" width="3.8" height="6" rx="0.8"/></g>
<rect x="898.5" y="121.7" width="28.9" height="19" fill="#44fcfc" stroke="#000" stroke-width="1.2"/>
</svg>
<svg id="labels" width="1000" height="800" viewBox="0 0 1000 800" style="position:absolute;left:0;top:0">
<g fill="#e9e9ee" stroke="#3166ea" stroke-width="1">
<rect x="26" y="434.45" width="21.5" height="19"/>
<rect x="50" y="434.45" width="18.5" height="19"/>
<rect x="71" y="434.45" width="822.5" height="19"/>
<rect x="896" y="434.45" width="18.5" height="19"/>
<rect x="917" y="434.45" width="21.5" height="19"/>
</g>
<g fill="#000" stroke="#000" stroke-width="0.18">
<text x="25.6" y="87" font-size="12.6" textLength="22" lengthAdjust="spacingAndGlyphs">3,51</text>
<text x="899.6" y="87" font-size="12.6" textLength="22" lengthAdjust="spacingAndGlyphs">3,51</text>
<text x="25.6" y="125.12" font-size="12.6" textLength="24.2" lengthAdjust="spacingAndGlyphs">3,46</text>
<text x="25.6" y="163.24" font-size="12.6" textLength="24.2" lengthAdjust="spacingAndGlyphs">3,40</text>
<text x="899.6" y="163.24" font-size="12.6" textLength="24.2" lengthAdjust="spacingAndGlyphs">3,40</text>
<text x="25.6" y="201.36" font-size="12.6" textLength="24.2" lengthAdjust="spacingAndGlyphs">3,35</text>
<text x="899.6" y="201.36" font-size="12.6" textLength="24.2" lengthAdjust="spacingAndGlyphs">3,35</text>
<text x="25.6" y="239.48" font-size="12.6" textLength="24.2" lengthAdjust="spacingAndGlyphs">3,30</text>
<text x="899.6" y="239.48" font-size="12.6" textLength="24.2" lengthAdjust="spacingAndGlyphs">3,30</text>
<text x="25.6" y="277.6" font-size="12.6" textLength="24.2" lengthAdjust="spacingAndGlyphs">3,25</text>
<text x="899.6" y="277.6" font-size="12.6" textLength="24.2" lengthAdjust="spacingAndGlyphs">3,25</text>
<text x="25.6" y="315.72" font-size="12.6" textLength="22" lengthAdjust="spacingAndGlyphs">3,19</text>
<text x="899.6" y="315.72" font-size="12.6" textLength="22" lengthAdjust="spacingAndGlyphs">3,19</text>
<text x="25.6" y="353.84" font-size="12.6" textLength="22" lengthAdjust="spacingAndGlyphs">3,14</text>
<text x="899.6" y="353.84" font-size="12.6" textLength="22" lengthAdjust="spacingAndGlyphs">3,14</text>
<text x="25.6" y="391.96" font-size="12.6" textLength="24.2" lengthAdjust="spacingAndGlyphs">3,09</text>
<text x="899.6" y="391.96" font-size="12.6" textLength="24.2" lengthAdjust="spacingAndGlyphs">3,09</text>
<text x="25.6" y="430.08" font-size="12.6" textLength="24.2" lengthAdjust="spacingAndGlyphs">3,04</text>
<text x="899.6" y="430.08" font-size="12.6" textLength="24.2" lengthAdjust="spacingAndGlyphs">3,04</text>
<clipPath id="c346"><rect x="895" y="110" width="40" height="11.2"/></clipPath>
<text x="899.6" y="126.1" font-size="12.6" textLength="24.2" lengthAdjust="spacingAndGlyphs" clip-path="url(#c346)">3,46</text>
<text x="89.4" y="449" font-size="12.6" textLength="13.6" lengthAdjust="spacingAndGlyphs">25</text>
<text x="128.4" y="449" font-size="12.6" textLength="13.6" lengthAdjust="spacingAndGlyphs">28</text>
<text x="180.4" y="449" font-size="12.6" textLength="13.6" lengthAdjust="spacingAndGlyphs">04</text>
<text x="219.4" y="449" font-size="12.6" textLength="13.6" lengthAdjust="spacingAndGlyphs">09</text>
<text x="260.5" y="449" font-size="12.6" textLength="11.4" lengthAdjust="spacingAndGlyphs">12</text>
<text x="299.5" y="449" font-size="12.6" textLength="11.4" lengthAdjust="spacingAndGlyphs">17</text>
<text x="337.4" y="449" font-size="12.6" textLength="13.6" lengthAdjust="spacingAndGlyphs">22</text>
<text x="376.4" y="449" font-size="12.6" textLength="13.6" lengthAdjust="spacingAndGlyphs">29</text>
<text x="404.85" y="449" font-size="12.6" textLength="36.7" lengthAdjust="spacingAndGlyphs">Gen26</text>
<text x="455.4" y="449" font-size="12.6" textLength="13.6" lengthAdjust="spacingAndGlyphs">07</text>
<text x="495.5" y="449" font-size="12.6" textLength="11.4" lengthAdjust="spacingAndGlyphs">12</text>
<text x="534.5" y="449" font-size="12.6" textLength="11.4" lengthAdjust="spacingAndGlyphs">15</text>
<text x="573.4" y="449" font-size="12.6" textLength="13.6" lengthAdjust="spacingAndGlyphs">20</text>
<text x="612.4" y="449" font-size="12.6" textLength="13.6" lengthAdjust="spacingAndGlyphs">23</text>
<text x="651.4" y="449" font-size="12.6" textLength="13.6" lengthAdjust="spacingAndGlyphs">28</text>
<text x="679.95" y="449" font-size="12.6" textLength="34.5" lengthAdjust="spacingAndGlyphs">Feb26</text>
<text x="730.4" y="449" font-size="12.6" textLength="13.6" lengthAdjust="spacingAndGlyphs">05</text>
<text x="770.5" y="449" font-size="12.6" textLength="11.4" lengthAdjust="spacingAndGlyphs">10</text>
<text x="809.5" y="449" font-size="12.6" textLength="11.4" lengthAdjust="spacingAndGlyphs">13</text>
<text x="848.5" y="449" font-size="12.6" textLength="11.4" lengthAdjust="spacingAndGlyphs">18</text>
<text x="34.9" y="449.4" font-size="12.5" text-anchor="middle">&lt;&lt;</text>
<text x="58" y="449.4" font-size="12.5" text-anchor="middle">&lt;</text>
<text x="903.2" y="449.4" font-size="12.5" text-anchor="middle">&gt;</text>
<text x="926" y="449.4" font-size="12.5" text-anchor="middle">&gt;&gt;</text>
<text x="44.9" y="481.9" font-size="12.4" textLength="21.7" lengthAdjust="spacingAndGlyphs">0,01</text>
<text x="38.3" y="565" font-size="12.4" textLength="28.3" lengthAdjust="spacingAndGlyphs">-0,03</text>
<text x="55.1" y="585" font-size="12.4" textLength="11.5" lengthAdjust="spacingAndGlyphs">10</text>
<text x="59.9" y="620" font-size="12.4" textLength="6.7" lengthAdjust="spacingAndGlyphs">0</text>
<text x="50.7" y="668" font-size="12.4" textLength="15.9" lengthAdjust="spacingAndGlyphs">-10</text>
<text x="48.1" y="688" font-size="12.4" textLength="18.5" lengthAdjust="spacingAndGlyphs">100</text>
<text x="52.9" y="713" font-size="12.4" textLength="13.7" lengthAdjust="spacingAndGlyphs">60</text>
<text x="52.9" y="732" font-size="12.4" textLength="13.7" lengthAdjust="spacingAndGlyphs">40</text>
<text x="59.9" y="770.8" font-size="12.4" textLength="6.7" lengthAdjust="spacingAndGlyphs">0</text>
<text x="897.8" y="477.7" font-size="11.7" textLength="29.2" lengthAdjust="spacingAndGlyphs">Macd</text>
<text x="897.8" y="488.5" font-size="11.7" textLength="34.1" lengthAdjust="spacingAndGlyphs">Forest</text>
<text x="897.8" y="499.4" font-size="11.7" textLength="46.2" lengthAdjust="spacingAndGlyphs">26,12,26</text>
<text x="897.8" y="580.4" font-size="11.7" textLength="18.6" lengthAdjust="spacingAndGlyphs">ICV</text>
<text x="897.8" y="591.6" font-size="11.7" textLength="32.4" lengthAdjust="spacingAndGlyphs">5, 3, 1</text>
<text x="897.8" y="683.6" font-size="11.7" textLength="37.4" lengthAdjust="spacingAndGlyphs">EST. %</text>
<text x="897.8" y="694" font-size="11.7" textLength="26.8" lengthAdjust="spacingAndGlyphs">FULL</text>
<text x="897.8" y="705.4" font-size="11.7" textLength="43" lengthAdjust="spacingAndGlyphs">(28,3,6)</text>
</g>
<g fill="#1a1aff" stroke="#1a1aff" stroke-width="0.18">
<text x="899.7" y="515.7" font-size="12" textLength="27.4" lengthAdjust="spacingAndGlyphs">-0,01</text>
<text x="899.7" y="623.7" font-size="12" textLength="10" lengthAdjust="spacingAndGlyphs">-1</text>
<text x="900.6" y="727" font-size="12" textLength="30.2" lengthAdjust="spacingAndGlyphs">45,45</text>
</g>
<text x="900.7" y="135.9" font-size="12.8" textLength="24.2" lengthAdjust="spacingAndGlyphs" stroke="#000" stroke-width="0.18">3,44</text>
<text x="80" y="62.5" font-size="13.05" stroke="#000" stroke-width="0.15">Last: 3.44 - 20/02/26</text>
<g fill="#c6c6c6" stroke="#c6c6c6" stroke-width="0.25" opacity="0.9">
<text x="80.3" y="481.6" font-size="12.2">Histgrama MACD</text>
<text x="80.3" y="584.8" font-size="12.5">Indice Calidad Vela</text>
<text x="80.3" y="688.2" font-size="12.55">Full Estocastico</text>
</g>
<text x="20.4" y="789.6" font-size="12.35" stroke="#000" stroke-width="0.2">ERCROS (ECR.MC)</text>
<text x="306.3" y="790" font-size="13.47" fill="#1a1aff" stroke="#1a1aff" stroke-width="0.25">/Users/mserra/Library/CloudStorage/Dropbox/WorkDB/DatosBolsa/Configs/Config.DEFAULT.xml</text>
<rect x="919.5" y="777" width="65.5" height="17.3" fill="#ee0b0b" stroke="#8a8a8a" stroke-width="1"/>
<text x="923.7" y="789.7" font-size="11.2" fill="#fff">OFF</text>
</svg>
<div class="sel" style="left:19px;width:134.5px;padding-left:8px">CandleSticks<i><svg width="16" height="15" viewBox="0 0 16 15"><path d="M5 6L8 3L11 6M5 9L8 12L11 9" fill="none" stroke="#fff" stroke-width="1.5" stroke-linecap="round" stroke-linejoin="round"/></svg></i></div>
<div class="sel" style="left:194.5px;width:98px;padding-left:9.3px">3 mesos<i><svg width="16" height="15" viewBox="0 0 16 15"><path d="M5 6L8 3L11 6M5 9L8 12L11 9" fill="none" stroke="#fff" stroke-width="1.5" stroke-linecap="round" stroke-linejoin="round"/></svg></i></div>
<div class="sel" style="left:304px;width:91px;padding-left:8.6px">dia<i><svg width="16" height="15" viewBox="0 0 16 15"><path d="M5 6L8 3L11 6M5 9L8 12L11 9" fill="none" stroke="#fff" stroke-width="1.5" stroke-linecap="round" stroke-linejoin="round"/></svg></i></div>
<svg class="ico" style="left:161px;top:8px" width="26" height="26" viewBox="0 0 26 26"><defs><radialGradient id="hg" cx="50%" cy="28%" r="75%"><stop offset="0" stop-color="#8a88ea"/><stop offset="0.4" stop-color="#3430b4"/><stop offset="1" stop-color="#1d1a86"/></radialGradient></defs><circle cx="13" cy="13" r="11.2" fill="url(#hg)" stroke="#a6a4f0" stroke-width="1.2"/><ellipse cx="13" cy="6.6" rx="7.6" ry="3.8" fill="#fff" opacity="0.22"/><text x="13" y="20.4" text-anchor="middle" font-size="20.5" font-weight="bold" fill="#f4f4ff">?</text></svg>
<svg class="ico" style="left:404px;top:11px" width="21" height="21" viewBox="0 0 21 21"><rect x="1" y="1.3" width="18.5" height="4.4" fill="#111"/><path d="M5 3.8h2v-1h2v1h2v-1h2v1h2" stroke="#25d21b" stroke-width="1" fill="none"/><rect x="1.5" y="6.3" width="17.5" height="11.8" fill="#fff" stroke="#222" stroke-width="1"/><path d="M4.5 13.7L6.3 11.9L8.1 13.2L12.2 10.1" stroke="#2222e8" stroke-width="1.1" fill="none"/><rect x="0.5" y="18.6" width="19.5" height="1" fill="#888"/></svg>
<div class="cb on" style="left:435px"><svg width="14" height="14" viewBox="0 0 14 14"><path d="M3.4 7.4L6 10.1L10.6 3.9" fill="none" stroke="#fff" stroke-width="1.7" stroke-linecap="round" stroke-linejoin="round"/></svg></div>
<div class="lbl" style="left:455.5px">Guies</div>
<div class="cb off" style="left:505px"></div>
<div class="lbl" style="left:525.3px;letter-spacing:0.2px">Cursor</div>
<svg class="ico" style="left:585px;top:5px" width="25" height="30" viewBox="0 0 25 30"><defs><linearGradient id="tg" x1="0" x2="1"><stop offset="0" stop-color="#4a4a4a"/><stop offset="0.35" stop-color="#7e7e7e"/><stop offset="0.7" stop-color="#4c4c4c"/><stop offset="1" stop-color="#2e2e2e"/></linearGradient><linearGradient id="tg2" x1="0" y1="0" x2="0" y2="1"><stop offset="0" stop-color="#000" stop-opacity="0"/><stop offset="1" stop-color="#000" stop-opacity="0.35"/></linearGradient></defs><path d="M2 5.2L4.6 24.4Q5.2 28.4 12.2 28.6Q19.2 28.4 19.8 24.4L22.2 5.2Z" fill="url(#tg)"/><path d="M2 5.2L4.6 24.4Q5.2 28.4 12.2 28.6Q19.2 28.4 19.8 24.4L22.2 5.2Z" fill="url(#tg2)"/><ellipse cx="12.1" cy="5" rx="10.1" ry="2.6" fill="#6a6a6a" stroke="#8e8e8e" stroke-width="0.9"/><path d="M5 19.5Q10 15.5 19.6 18L19 24.5Q12 27.5 5.6 24.8Z" fill="#9a9a9a" opacity="0.35"/></svg>
<svg class="ico" style="left:619px;top:5px" width="29" height="30" viewBox="0 0 29 30"><defs><linearGradient id="dg1" x1="0" y1="0" x2="0" y2="1"><stop offset="0" stop-color="#e9f0fd"/><stop offset="1" stop-color="#a9c3f4"/></linearGradient><linearGradient id="xg" x1="0" y1="0" x2="0" y2="1"><stop offset="0" stop-color="#e02222"/><stop offset="1" stop-color="#a80808"/></linearGradient></defs><rect x="4.4" y="2.4" width="19" height="25.4" rx="0.8" fill="url(#dg1)" stroke="#6f9cec" stroke-width="0.9"/><path d="M5.5 4.2Q8.2 3.2 9.6 6.2Q11.6 10.2 13.6 13.2Q17.4 8.2 23 6Q26 5.6 26 8.4Q21.4 11.4 17.6 16.8Q21.6 21.2 26.4 23.4Q26.8 26.4 23.6 27.4Q18.2 25 14.4 20.6Q11 24.6 6.6 28.4Q2.4 28.6 1.4 25.4Q6.6 22 10.4 16.6Q7.2 11.6 5.4 7Q5 5 5.5 4.2Z" fill="url(#xg)" stroke="#7c0606" stroke-width="0.8"/></svg>
<svg class="ico" style="left:654px;top:5px" width="30" height="30" viewBox="0 0 30 30"><defs><radialGradient id="fl"><stop offset="0" stop-color="#fff"/><stop offset="0.72" stop-color="#fbfae6"/><stop offset="0.9" stop-color="#ece79c"/><stop offset="1" stop-color="#f4f1c0" stop-opacity="0.3"/></radialGradient><linearGradient id="cm" x1="0" x2="1"><stop offset="0" stop-color="#6e6e6e"/><stop offset="0.32" stop-color="#8a8a8a"/><stop offset="0.36" stop-color="#d6d6d6"/><stop offset="1" stop-color="#c2c2c2"/></linearGradient></defs><rect x="2" y="10.4" width="22.6" height="16.6" rx="1.6" fill="url(#cm)" stroke="#4e4e4e" stroke-width="1"/><path d="M3.4 10.4V8.6Q5.4 7.2 8 8.6V10.4Z" fill="#777" stroke="#4e4e4e" stroke-width="0.8"/><circle cx="18.3" cy="11.5" r="9.3" fill="url(#fl)" opacity="0.92"/><rect x="15" y="10.2" width="7.4" height="3.6" rx="1.2" fill="#fff" stroke="#8a8a8a" stroke-width="0.8"/><circle cx="17.8" cy="21.4" r="5" fill="#e3e3e3" stroke="#4a4a4a" stroke-width="1.1"/><circle cx="17.8" cy="21.4" r="2.8" fill="#6a7a4a" stroke="#333" stroke-width="0.9"/><path d="M2 26.4H24.6" stroke="#3c3c3c" stroke-width="1.2"/></svg>
<svg class="ico" style="left:693.5px;top:10.5px" width="22" height="22" viewBox="0 0 22 22"><defs><linearGradient id="fg" x1="0" y1="0" x2="1" y2="1"><stop offset="0" stop-color="#e6f2ff"/><stop offset="1" stop-color="#9cc0f0"/></linearGradient><linearGradient id="sg" x1="0" x2="1"><stop offset="0" stop-color="#f0f0f0"/><stop offset="1" stop-color="#9e9e9e"/></linearGradient></defs><rect x="0.7" y="0.7" width="20.4" height="20.4" fill="#3b41bb" stroke="#2a2f9a" stroke-width="0.8"/><rect x="4.2" y="1.2" width="13.2" height="9.6" fill="url(#fg)"/><rect x="4.4" y="14.4" width="13" height="6.6" fill="url(#sg)"/><rect x="5.8" y="15.4" width="2.3" height="5.2" fill="#3b41bb"/><rect x="18.2" y="1.8" width="1.9" height="1.9" fill="#fff"/></svg>
<svg class="ico" style="left:727px;top:12px" width="24" height="18" viewBox="0 0 24 18"><path d="M1.6 15.4V3Q1.6 1.4 3 1.4H7.6Q8.8 1.4 9.4 2.4L10.4 4H16.6Q18 4 18 5.4V7.6" fill="#fdf6e8" stroke="#d0a56e" stroke-width="1" stroke-linejoin="round"/><path d="M1.8 16.2L6.2 8.2Q6.6 7.6 7.4 7.6H21.6Q22.8 7.6 22.2 8.7L18.4 15.5Q18 16.2 17.2 16.2Z" fill="#fbeed6" stroke="#d0a56e" stroke-width="1" stroke-linejoin="round"/></svg>
<svg class="ico" style="left:762px;top:8px" width="27" height="26" viewBox="0 0 27 26"><defs><linearGradient id="rg" x1="0" y1="0" x2="0" y2="1"><stop offset="0" stop-color="#86d45c"/><stop offset="1" stop-color="#46a22a"/></linearGradient></defs><g fill="url(#rg)" stroke="#3f9a26" stroke-width="0.7" stroke-linejoin="round"><path d="M1.8 9.8C2 4 7 0.8 12.4 0.8C16 0.8 18.8 2.2 20.6 4.4L22.5 2.8L24.35 10.15L16.45 9.95L18 8.5C16.6 7.7 14.8 7.2 12.6 7.2C9.4 7.2 7 8.6 6.8 10.8Z"/><path d="M1.8 9.8C2 4 7 0.8 12.4 0.8C16 0.8 18.8 2.2 20.6 4.4L22.5 2.8L24.35 10.15L16.45 9.95L18 8.5C16.6 7.7 14.8 7.2 12.6 7.2C9.4 7.2 7 8.6 6.8 10.8Z" transform="rotate(180 13.05 12.05)"/></g></svg>
<svg class="ico" style="left:796px;top:7px" width="29" height="28" viewBox="0 0 29 28"><defs><radialGradient id="dg" cx="45%" cy="35%" r="70%"><stop offset="0" stop-color="#7cc256"/><stop offset="0.6" stop-color="#3f9428"/><stop offset="1" stop-color="#1f5c12"/></radialGradient><linearGradient id="sgr" x1="0" y1="0" x2="0" y2="1"><stop offset="0" stop-color="#fff"/><stop offset="1" stop-color="#c4c4c4"/></linearGradient></defs><ellipse cx="13" cy="24.4" rx="12.4" ry="1.3" fill="#1c1c1c"/><circle cx="15.6" cy="13" r="10.7" fill="url(#dg)"/><path d="M21.6 5.4Q14.6 0.6 10 5Q6.6 9.8 13 13Q17.4 15 15.6 17.6Q13.2 19.6 8.4 16.6L7 21Q10.4 23.4 13.4 23.4L14.6 26L16.4 23.2Q20.4 22.4 21.8 18.6Q23.2 13.6 16.8 10.4Q13.4 8.8 14.8 7Q16.6 5.6 19.8 8.4Z" fill="url(#sgr)" stroke="#8a8a8a" stroke-width="0.5"/></svg>
<svg class="ico" style="left:830px;top:6px" width="30" height="30" viewBox="0 0 30 30"><defs><linearGradient id="eg" x1="0" y1="0" x2="1" y2="1"><stop offset="0" stop-color="#ffffff"/><stop offset="0.55" stop-color="#c8c8c8"/><stop offset="1" stop-color="#8a8a8a"/></linearGradient></defs><g transform="rotate(-12 15 15)"><path d="M25 6.4Q18 1 11.4 5.4Q8.6 7.6 7.6 10.6H3.4L2.6 13.2H7Q6.9 14.4 7 15.6H3.2L2.4 18.2H7.8Q9.6 23 14.2 25Q20.6 27.2 26.4 22.2L23.6 18.6Q19.6 22 15.8 20.6Q13.6 19.6 12.8 18.2H19.4L20.2 15.6H12Q11.8 14.4 12 13.2H20.8L21.6 10.6H12.8Q14 8.4 16.4 7.6Q19.8 6.8 22.6 9.6Z" fill="#4e4e4e" transform="translate(0.9 1.6)"/><path d="M25 6.4Q18 1 11.4 5.4Q8.6 7.6 7.6 10.6H3.4L2.6 13.2H7Q6.9 14.4 7 15.6H3.2L2.4 18.2H7.8Q9.6 23 14.2 25Q20.6 27.2 26.4 22.2L23.6 18.6Q19.6 22 15.8 20.6Q13.6 19.6 12.8 18.2H19.4L20.2 15.6H12Q11.8 14.4 12 13.2H20.8L21.6 10.6H12.8Q14 8.4 16.4 7.6Q19.8 6.8 22.6 9.6Z" fill="url(#eg)" stroke="#7a7a7a" stroke-width="0.5"/></g></svg>
<svg class="ico" style="left:863.7px;top:5.1px" width="30" height="30" viewBox="0 0 30 30"><defs><radialGradient id="gg" cx="50%" cy="40%" r="60%"><stop offset="0" stop-color="#d2d2d2"/><stop offset="0.55" stop-color="#a2a2a2"/><stop offset="1" stop-color="#6c6c6c"/></radialGradient></defs><path d="M28.6 17.9L26.7 22.5L23.7 21.8L21.8 23.7L22.5 26.7L17.9 28.6L16.3 25.9L13.7 25.9L12.1 28.6L7.5 26.7L8.2 23.7L6.3 21.8L3.3 22.5L1.4 17.9L4.1 16.3L4.1 13.7L1.4 12.1L3.3 7.5L6.3 8.2L8.2 6.3L7.5 3.3L12.1 1.4L13.7 4.1L16.3 4.1L17.9 1.4L22.5 3.3L21.8 6.3L23.7 8.2L26.7 7.5L28.6 12.1L25.9 13.7L25.9 16.3Z" fill="url(#gg)" stroke="#6a6a6a" stroke-width="1.4" stroke-linejoin="round"/><circle cx="15" cy="15" r="5.2" fill="#e4e4e4" stroke="#5e5e5e" stroke-width="1.6"/><circle cx="15" cy="15" r="2" fill="#fff" stroke="#777" stroke-width="0.6"/></svg>
<svg class="ico" style="left:900px;top:7px" width="28" height="27" viewBox="0 0 28 27"><defs><linearGradient id="cg" x1="0" y1="0" x2="0" y2="1"><stop offset="0.5" stop-color="#fff"/><stop offset="1" stop-color="#d2d2d2"/></linearGradient></defs><g transform="rotate(-9 14 13.5)"><rect x="3.6" y="4" width="20" height="20" rx="1" fill="url(#cg)" stroke="#5a5a5a" stroke-width="0.9"/><rect x="3.6" y="4" width="20" height="4.6" fill="#68b61e"/><rect x="3.6" y="4" width="20" height="1.6" fill="#86d238"/><text x="13.8" y="20.6" text-anchor="middle" font-size="12" fill="#111" stroke="#111" stroke-width="0.3">17</text></g></svg>
<div class="radio" style="top:15px"></div>
<div class="rb " style="top:36px"><svg width="33" height="21.5" viewBox="0 0 33 21.5"><defs><radialGradient id="mg" cx="40%" cy="35%" r="70%"><stop offset="0" stop-color="#dcdcdc"/><stop offset="1" stop-color="#9c9c9c"/></radialGradient></defs><rect x="8.5" y="2" width="15.5" height="17.5" fill="#f3f3f3" opacity="0.8"/><circle cx="14.1" cy="8.2" r="4.1" fill="url(#mg)" stroke="#2e2e2e" stroke-width="1.3"/><path d="M17.4 11.6L22.4 17" stroke="#262626" stroke-width="1.9" stroke-linecap="round"/></svg></div>
<div class="rb w" style="top:61px;border-color:#fff #9c9c9c #9c9c9c #9c9c9c;background:#fdf7f9"><svg width="33" height="21.5" viewBox="0 0 33 21.5"><path d="M0.5 1.5H2.2M30.8 1.5H32.5" stroke="#9c9c9c" stroke-width="1"/><path d="M2.1 21.3V3L2.9 1.4L3.8 5V21.3ZM5.1 21.3V7.5L6.4 6.1L7.8 7.8L11.5 17.6L14.6 4.1L17.9 14.9L19.6 17.6L20 21.3ZM25 21.3L27.7 10.9L30.1 17V21.3Z" fill="#4f58b2"/><path d="M8 21.3V9L11.3 17.6H19.6V21.3Z" fill="#4f58b2"/><path d="M20 21.3H25V20.4H20Z" fill="#4f58b2"/><path d="M4.6 1.5V21M18.6 1.5V21" stroke="#d9d9ea" stroke-width="0.9"/><path d="M2.1 5.5L4.4 8.5L13.9 7.8L16.6 5.5L20 7.8L23.4 11.5L25.4 7.8H28.8L30.1 8.5" fill="none" stroke="#e01212" stroke-width="1.15" stroke-linejoin="round"/></svg></div>
<div class="rb " style="top:85px"><svg width="33" height="21.5" viewBox="0 0 33 21.5"><path d="M3.9 10.4H28" stroke="#e62222" stroke-width="2.6"/></svg></div>
<div class="rb " style="top:110px"><svg width="33" height="21.5" viewBox="0 0 33 21.5"><path d="M3.9 10.4H28" stroke="#1414f4" stroke-width="2.6"/></svg></div>
<div class="rb " style="top:135px"><svg width="33" height="21.5" viewBox="0 0 33 21.5"><path d="M4.5 16L20.5 0.5M12.5 21.5L28 5.5" stroke="#222" stroke-width="1.3" fill="none"/><path d="M12.5 21L10 13.5L17.5 17.5L15 8.5L23 12.5L20.5 2.5L27.5 6" stroke="#3a3ae8" stroke-width="1" fill="none"/></svg></div>
<div class="rb " style="top:160px"><svg width="33" height="21.5" viewBox="0 0 33 21.5"><path d="M5.5 21.5L27.5 0" stroke="#111" stroke-width="1.5" fill="none"/><path d="M20.2 1L20.6 7L26 5.6" stroke="#2222e8" stroke-width="1.3" fill="none"/><path d="M8.6 14.6L14 13.6L13.8 19" stroke="#2222e8" stroke-width="1.3" fill="none"/></svg></div>
<div class="rb " style="top:185px"><svg width="33" height="21.5" viewBox="0 0 33 21.5"><path d="M5.5 21.5L27.5 0" stroke="#111" stroke-width="1.5" fill="none"/><path d="M20.2 1L20.6 7L26 5.6" stroke="#2222e8" stroke-width="1.3" fill="none"/><path d="M8.6 14.6L14 13.6L13.8 19" stroke="#2222e8" stroke-width="1.3" fill="none"/><path d="M10.8 5.6V4.2H5.6L9 8.4L5.6 12.4H10.8V11" stroke="#e01616" stroke-width="1.5" fill="none"/></svg></div>
<div class="rb " style="top:210px"><svg width="33" height="21.5" viewBox="0 0 33 21.5"><path d="M14.6 4.8h3.8v3.8h3.8l-5.7 6.6-5.7-6.6h3.8z" fill="#f01a0c"/></svg></div>
<div class="rb " style="top:235px"><svg width="33" height="21.5" viewBox="0 0 33 21.5"><path d="M14.6 16h3.8v-4h3.8l-5.7-6.8-5.7 6.8h3.8z" fill="#0a0af5"/></svg></div>
<div class="rb " style="top:260px"><svg width="33" height="21.5" viewBox="0 0 33 21.5"><path d="M7.2 6h2v3.4h3v2h-3v3.6h-2v-3.6h-3v-2h3z" fill="#8fc85a" stroke="#5a9a2c" stroke-width="0.8"/><path d="M17.6 6h3.6v3h3.4l-5.2 6-5.2-6h3.4z" fill="#de2418"/><path d="M28 12.2l2.6 2.8-2.6 2.8-2.6-2.8z" fill="#fff" stroke="#e02020" stroke-width="1"/></svg></div>
<div class="rb" style="top:285px;border-color:#f0f0f0 #9c9c9c;background:#f0f0f0"><svg width="33" height="21.5" viewBox="0 0 33 21.5"><g stroke="#333" stroke-width="2"><path d="M4.2 7h7M13.5 7h7M22.6 7h6"/><path d="M4.2 11.9h7M13.5 11.9h7M22.6 11.9h6"/><path d="M4.2 17h7M13.5 17h7M22.6 17h6"/></g></svg></div>
<div class="rb" style="top:311px;border-color:#f0f0f0 #9c9c9c;background:#efefef"><svg width="33" height="21.5" viewBox="0 0 33 21.5"><g stroke="#1414f0" stroke-width="1.3" fill="#1414f0"><path d="M3 1.6h16M3 19.2h16M11 2.5v16" fill="none"/><path d="M11 2.2l2.4 3.4h-4.8zM11 18.6l2.4-3.4h-4.8z" stroke-width="0.6"/></g><g stroke="#111" stroke-width="1.3" fill="none"><path d="M27.6 5.4L21 18.2"/><circle cx="22" cy="7.4" r="1.6"/><circle cx="26.6" cy="16.2" r="1.6"/></g></svg></div>
<div class="rb " style="top:335px"><svg width="33" height="21.5" viewBox="0 0 33 21.5"><path d="M5.8 5.6h11.8" stroke="#2a6af0" stroke-width="1.3"/><path d="M5.4 11.1h12.6" stroke="#111" stroke-width="1.5"/><path d="M5.4 16.6h12.4" stroke="#ef4535" stroke-width="1.5"/><g stroke="#111" stroke-width="1.4" fill="none"><path d="M27.8 5.2L20.6 18.2"/><circle cx="21.3" cy="7.4" r="1.7"/><circle cx="26.8" cy="16" r="1.7"/></g></svg></div>
<div class="rb " style="top:361px"><svg width="33" height="21.5" viewBox="0 0 33 21.5"><rect x="7" y="1" width="19" height="19.5" fill="#dadae2"/><circle cx="16.5" cy="10.8" r="7.2" fill="#ececf0" stroke="#c02828" stroke-width="2.7"/><path d="M11.4 5.6L21.6 16" stroke="#c02828" stroke-width="2.5"/></svg></div>
<div class="rb " style="top:385px"><svg width="33" height="21.5" viewBox="0 0 33 21.5"><defs><radialGradient id="rd"><stop offset="0" stop-color="#ffd0d0"/><stop offset="0.35" stop-color="#f86a6a"/><stop offset="1" stop-color="#f00c0c"/></radialGradient></defs><circle cx="16.4" cy="10.8" r="5.9" fill="url(#rd)"/></svg></div>
<div class="rb " style="top:408.4px"><svg width="33" height="21.5" viewBox="0 0 33 21.5"><g fill="#2a66e0" stroke="#1a4ac0" stroke-width="0.5"><path d="M10.4 9.4Q13.4 4 18.4 5.8L18.8 3L22.4 7.6L17.2 10L17.6 7.8Q14.4 7 12 10.2Z"/><path d="M22.4 11.6Q19.4 17 14.4 15.2L14 18L10.4 13.4L15.6 11L15.2 13.2Q18.4 14 20.8 10.8Z"/></g></svg></div>
<div class="radio" style="top:466px"></div>
<div class="rb w" style="top:487px"><svg width="33" height="21.5" viewBox="0 0 33 21.5"><path d="M9 5.8h4v4.2h4l-6 6.6-6-6.6h4z" fill="#e0281c"/><path d="M21.6 17h4v-4.6h4l-6-6.8-6 6.8h4z" fill="#63b532"/></svg></div>
<div class="rb " style="top:513px"><svg width="33" height="21.5" viewBox="0 0 33 21.5"><path d="M5.8 5.6h11.8" stroke="#2a6af0" stroke-width="1.3"/><path d="M5.4 11.1h12.6" stroke="#111" stroke-width="1.5"/><path d="M5.4 16.6h12.4" stroke="#ef4535" stroke-width="1.5"/><g stroke="#111" stroke-width="1.4" fill="none"><path d="M27.8 5.2L20.6 18.2"/><circle cx="21.3" cy="7.4" r="1.7"/><circle cx="26.8" cy="16" r="1.7"/></g></svg></div>
<div class="rb " style="top:541px"><svg width="33" height="21.5" viewBox="0 0 33 21.5"><path d="M2 3.4Q6 4.4 9.4 10T16 18L22.6 8.6L26.4 0.8" fill="none" stroke="#1414f0" stroke-width="2" stroke-linejoin="round"/><path d="M2 2.6Q8.6 4.4 12.6 10T18.6 17L24.6 13L29.6 0.8" fill="none" stroke="#e01818" stroke-width="2" stroke-linejoin="round"/><path d="M5.5 14.4H31" stroke="#2c8a1c" stroke-width="0.9" stroke-dasharray="2.6 2"/><path d="M25 15.6v3.2" stroke="#5a5ae0" stroke-width="0.8"/></svg></div>
<div class="radio on" style="top:573.2px"></div>
<div class="rb w" style="top:595px"><svg width="33" height="21.5" viewBox="0 0 33 21.5"><path d="M9 5.8h4v4.2h4l-6 6.6-6-6.6h4z" fill="#e0281c"/><path d="M21.6 17h4v-4.6h4l-6-6.8-6 6.8h4z" fill="#63b532"/></svg></div>
<div class="rb " style="top:619px"><svg width="33" height="21.5" viewBox="0 0 33 21.5"><path d="M5.8 5.6h11.8" stroke="#2a6af0" stroke-width="1.3"/><path d="M5.4 11.1h12.6" stroke="#111" stroke-width="1.5"/><path d="M5.4 16.6h12.4" stroke="#ef4535" stroke-width="1.5"/><g stroke="#111" stroke-width="1.4" fill="none"><path d="M27.8 5.2L20.6 18.2"/><circle cx="21.3" cy="7.4" r="1.7"/><circle cx="26.8" cy="16" r="1.7"/></g></svg></div>
<div class="rb " style="top:643px"><svg width="33" height="21.5" viewBox="0 0 33 21.5"><path d="M2 3.4Q6 4.4 9.4 10T16 18L22.6 8.6L26.4 0.8" fill="none" stroke="#1414f0" stroke-width="2" stroke-linejoin="round"/><path d="M2 2.6Q8.6 4.4 12.6 10T18.6 17L24.6 13L29.6 0.8" fill="none" stroke="#e01818" stroke-width="2" stroke-linejoin="round"/><path d="M5.5 14.4H31" stroke="#2c8a1c" stroke-width="0.9" stroke-dasharray="2.6 2"/><path d="M25 15.6v3.2" stroke="#5a5ae0" stroke-width="0.8"/></svg></div>
<div class="radio" style="top:676px"></div>
<div class="rb w" style="top:697px"><svg width="33" height="21.5" viewBox="0 0 33 21.5"><path d="M9 5.8h4v4.2h4l-6 6.6-6-6.6h4z" fill="#e0281c"/><path d="M21.6 17h4v-4.6h4l-6-6.8-6 6.8h4z" fill="#63b532"/></svg></div>
<div class="rb " style="top:722px"><svg width="33" height="21.5" viewBox="0 0 33 21.5"><path d="M5.8 5.6h11.8" stroke="#2a6af0" stroke-width="1.3"/><path d="M5.4 11.1h12.6" stroke="#111" stroke-width="1.5"/><path d="M5.4 16.6h12.4" stroke="#ef4535" stroke-width="1.5"/><g stroke="#111" stroke-width="1.4" fill="none"><path d="M27.8 5.2L20.6 18.2"/><circle cx="21.3" cy="7.4" r="1.7"/><circle cx="26.8" cy="16" r="1.7"/></g></svg></div>
<div class="rb " style="top:747px"><svg width="33" height="21.5" viewBox="0 0 33 21.5"><path d="M2 3.4Q6 4.4 9.4 10T16 18L22.6 8.6L26.4 0.8" fill="none" stroke="#1414f0" stroke-width="2" stroke-linejoin="round"/><path d="M2 2.6Q8.6 4.4 12.6 10T18.6 17L24.6 13L29.6 0.8" fill="none" stroke="#e01818" stroke-width="2" stroke-linejoin="round"/><path d="M5.5 14.4H31" stroke="#2c8a1c" stroke-width="0.9" stroke-dasharray="2.6 2"/><path d="M25 15.6v3.2" stroke="#5a5ae0" stroke-width="0.8"/></svg></div>
</body></html>
